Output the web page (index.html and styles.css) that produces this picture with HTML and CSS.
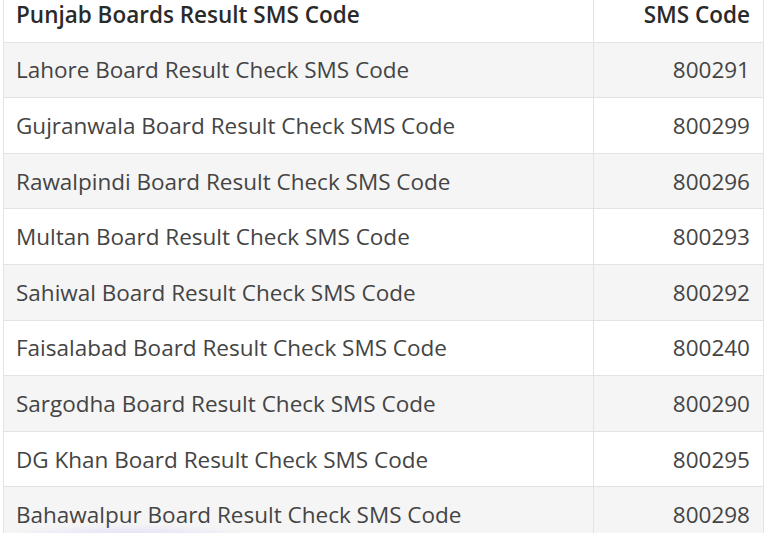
FILE: index.html
```html
<!DOCTYPE html>
<html>
<head>
<meta charset="utf-8">
<link rel="stylesheet" href="styles.css">
</head>
<body>
<div class="wrap">
<table class="codes">
<thead>
<tr><th class="name">Punjab Boards Result SMS Code</th><th class="code">SMS Code</th></tr>
</thead>
<tbody>
<tr><td class="name">Lahore Board Result Check SMS Code</td><td class="code">800291</td></tr>
<tr><td class="name">Gujranwala Board Result Check SMS Code</td><td class="code">800299</td></tr>
<tr><td class="name">Rawalpindi Board Result Check SMS Code</td><td class="code">800296</td></tr>
<tr><td class="name">Multan Board Result Check SMS Code</td><td class="code">800293</td></tr>
<tr><td class="name">Sahiwal Board Result Check SMS Code</td><td class="code">800292</td></tr>
<tr><td class="name">Faisalabad Board Result Check SMS Code</td><td class="code">800240</td></tr>
<tr><td class="name">Sargodha Board Result Check SMS Code</td><td class="code">800290</td></tr>
<tr><td class="name">DG Khan Board Result Check SMS Code</td><td class="code">800295</td></tr>
<tr><td class="name">Bahawalpur Board Result Check SMS Code</td><td class="code">800298</td></tr>
</tbody>
</table>
<div class="glow"></div>
</div>
</body>
</html>
```
FILE: styles.css
```css
html, body {
  margin: 0;
  padding: 0;
  background: #ffffff;
  overflow: hidden;
}
body {
  font-family: "Open Sans", "Noto Sans", sans-serif;
  color: #444444;
}
.wrap {
  position: relative;
  height: 533px;
  overflow: hidden;
  padding-left: 3px;
}
.codes {
  margin-top: -14px;
  width: 761px;
  border-collapse: collapse;
  font-size: 22.5px;
}
.codes th, .codes td {
  height: 55.6px;
  padding: 0 13px 0 12px;
  border: 1px solid #e3e3e3;
  box-sizing: border-box;
}
.codes th {
  font-weight: 600;
  color: #2a2a2a;
  text-align: left;
  background: #fff;
}
.codes td {
  font-weight: 400;
}
.codes .name {
  width: 590px;
}
.codes .code {
  text-align: right;
}
.codes tbody tr:nth-child(odd) td {
  background: #f5f5f5;
}
.glow {
  position: absolute;
  left: 0;
  bottom: -20px;
  width: 260px;
  height: 30px;
  background: radial-gradient(ellipse at center, rgba(190,170,255,0.35), rgba(190,170,255,0) 70%);
  pointer-events: none;
}
```
